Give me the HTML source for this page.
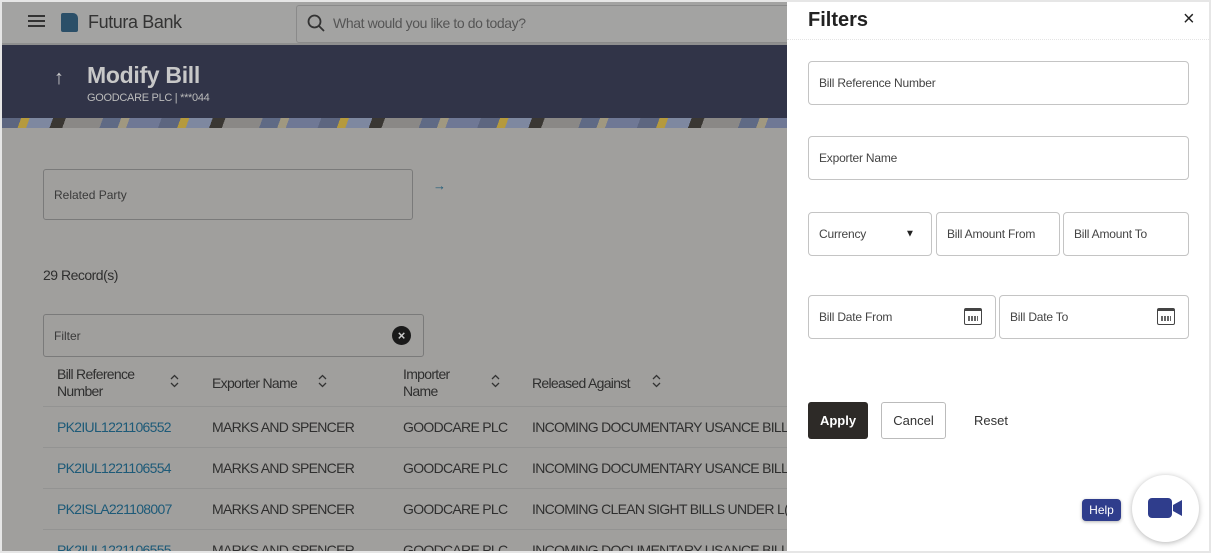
<!DOCTYPE html>
<html><head><meta charset="utf-8"><style>
*{box-sizing:border-box;margin:0;padding:0}
body{width:1211px;height:553px;overflow:hidden;font-family:"Liberation Sans",sans-serif;background:#e6e6e6;position:relative}
.frame{position:absolute;left:2px;top:2px;width:1207px;height:549px;background:#a09f9d;overflow:hidden}
.top{position:absolute;left:0;top:0;width:785px;height:43px;background:#a3a3a2;border-bottom:2px solid #8f8f8f}
.hdr{position:absolute;left:0;top:43px;width:785px;height:73px;background:#313448}
.stripe{position:absolute;left:0;top:116px;width:785px;height:10px;background:repeating-linear-gradient(110deg,#5d6680 0 18px,#b59a3e 18px 26px,#7e88a0 26px 48px,#3a3733 48px 60px,#8a8886 60px 95px,#5f6a85 95px 112px,#a09880 112px 120px,#6f7895 120px 150px)}
.t{position:absolute;white-space:nowrap}
.box{position:absolute;border:1px solid #7a7a7a;border-radius:3px}
.panel{position:absolute;left:785px;top:0;width:422px;height:549px;background:#fff}
.f{position:absolute;border:1px solid #c4c4c4;border-radius:4px;background:#fff;font-size:12px;color:#444;letter-spacing:-0.2px}
.f span{position:absolute;left:10px;top:50%;transform:translateY(-50%)}
.row{position:absolute;left:41px;width:744px;border-top:1px solid #939392}
.cell{position:absolute;font-size:14px;color:#2f2f2f;letter-spacing:-0.7px}
.lk{color:#1d5a78}
.cal{position:absolute;width:18px;height:17px;border:1.5px solid #444;border-top-width:3px;border-radius:2px;background:repeating-linear-gradient(90deg,#666 0 2px,#fff 2px 3px) 3px 5px/10px 5px no-repeat #fff}
</style></head><body><div class="frame">
<div class="top">
 <div class="t" style="left:26px;top:13px;width:17px;height:2px;background:#333;box-shadow:0 5px 0 #333,0 10px 0 #333"></div>
 <div class="t" style="left:59px;top:11px;width:17px;height:19px;background:#2b4f68;border-radius:2px 5px 2px 2px"></div>
 <div class="t" style="left:86px;top:10px;font-size:18px;color:#333;letter-spacing:-0.4px">Futura Bank</div>
 <div class="box" style="left:294px;top:3px;width:500px;height:38px;border-color:#8a8a8a"></div>
 <svg class="t" style="left:305px;top:12px" width="18" height="18"><circle cx="7.5" cy="7.5" r="6" fill="none" stroke="#333" stroke-width="1.8"/><line x1="12" y1="12" x2="17" y2="17" stroke="#333" stroke-width="1.8"/></svg>
 <div class="t" style="left:331px;top:13px;font-size:14px;color:#555;letter-spacing:-0.4px">What would you like to do today?</div>
</div>
<div class="hdr">
 <div class="t" style="left:52px;top:22px;font-size:20px;color:#ccc">↑</div>
 <div class="t" style="left:85px;top:17px;font-size:23px;font-weight:bold;color:#c8c8c8;letter-spacing:-0.3px">Modify Bill</div>
 <div class="t" style="left:85px;top:47px;font-size:11px;color:#bbb;letter-spacing:-0.3px">GOODCARE PLC | ***044</div>
</div>
<div class="stripe"></div>
<div class="box" style="left:41px;top:167px;width:370px;height:51px"></div>
<div class="t" style="left:52px;top:186px;font-size:12px;color:#3a3a3a">Related Party</div>
<div class="t" style="left:431px;top:176px;font-size:13px;color:#1d5a78">→</div>
<div class="t" style="left:41px;top:265px;font-size:14px;color:#2f2f2f;letter-spacing:-0.5px">29 Record(s)</div>
<div class="box" style="left:41px;top:312px;width:381px;height:43px"></div>
<div class="t" style="left:52px;top:327px;font-size:12px;color:#3a3a3a">Filter</div>
<div class="t" style="left:390px;top:324px;width:19px;height:19px;border-radius:50%;background:#1a1a1a;color:#ccc;font-size:13px;font-weight:bold;text-align:center;line-height:19px">×</div>
<div class="cell" style="left:55px;top:364px;line-height:17px">Bill Reference<br>Number</div>
<div class="cell" style="left:210px;top:373px">Exporter Name</div>
<div class="cell" style="left:401px;top:364px;line-height:17px">Importer<br>Name</div>
<div class="cell" style="left:530px;top:373px">Released Against</div>
<svg class="t" style="left:168px;top:372px" width="9" height="14"><path d="M1 5L4.5 1.5 8 5M1 9l3.5 3.5L8 9" fill="none" stroke="#333" stroke-width="1.3"/></svg>
<svg class="t" style="left:316px;top:372px" width="9" height="14"><path d="M1 5L4.5 1.5 8 5M1 9l3.5 3.5L8 9" fill="none" stroke="#333" stroke-width="1.3"/></svg>
<svg class="t" style="left:489px;top:372px" width="9" height="14"><path d="M1 5L4.5 1.5 8 5M1 9l3.5 3.5L8 9" fill="none" stroke="#333" stroke-width="1.3"/></svg>
<svg class="t" style="left:650px;top:372px" width="9" height="14"><path d="M1 5L4.5 1.5 8 5M1 9l3.5 3.5L8 9" fill="none" stroke="#333" stroke-width="1.3"/></svg>
<div class="row" style="top:404px"></div><div class="row" style="top:445px"></div><div class="row" style="top:486px"></div><div class="row" style="top:527px"></div>
<div class="cell lk" style="left:55px;top:417px">PK2IUL1221106552</div><div class="cell" style="left:210px;top:417px">MARKS AND SPENCER</div><div class="cell" style="left:401px;top:417px">GOODCARE PLC</div><div class="cell" style="left:530px;top:417px">INCOMING DOCUMENTARY USANCE BILL</div>
<div class="cell lk" style="left:55px;top:458px">PK2IUL1221106554</div><div class="cell" style="left:210px;top:458px">MARKS AND SPENCER</div><div class="cell" style="left:401px;top:458px">GOODCARE PLC</div><div class="cell" style="left:530px;top:458px">INCOMING DOCUMENTARY USANCE BILL</div>
<div class="cell lk" style="left:55px;top:499px">PK2ISLA221108007</div><div class="cell" style="left:210px;top:499px">MARKS AND SPENCER</div><div class="cell" style="left:401px;top:499px">GOODCARE PLC</div><div class="cell" style="left:530px;top:499px">INCOMING CLEAN SIGHT BILLS UNDER L(</div>
<div class="cell lk" style="left:55px;top:540px">PK2IUL1221106555</div><div class="cell" style="left:210px;top:540px">MARKS AND SPENCER</div><div class="cell" style="left:401px;top:540px">GOODCARE PLC</div><div class="cell" style="left:530px;top:540px">INCOMING DOCUMENTARY USANCE BILL</div>

<div class="panel">
 <div class="t" style="left:21px;top:7px;font-size:20px;font-weight:bold;color:#222">Filters</div>
 <div class="t" style="left:396px;top:6px;font-size:20px;color:#222">×</div>
 <div class="t" style="left:0;top:37px;width:422px;border-top:1px dotted #e4e4e4"></div>
 <div class="f" style="left:21px;top:59px;width:381px;height:44px"><span>Bill Reference Number</span></div>
 <div class="f" style="left:21px;top:134px;width:381px;height:44px"><span>Exporter Name</span></div>
 <div class="f" style="left:21px;top:210px;width:124px;height:44px"><span>Currency</span><span style="left:96px;font-size:10px;color:#222">▼</span></div>
 <div class="f" style="left:149px;top:210px;width:124px;height:44px"><span>Bill Amount From</span></div>
 <div class="f" style="left:276px;top:210px;width:126px;height:44px"><span>Bill Amount To</span></div>
 <div class="f" style="left:21px;top:293px;width:188px;height:44px"><span>Bill Date From</span><div class="cal" style="left:155px;top:12px"></div></div>
 <div class="f" style="left:212px;top:293px;width:190px;height:44px"><span>Bill Date To</span><div class="cal" style="left:157px;top:12px"></div></div>
 <div class="t" style="left:21px;top:400px;width:60px;height:37px;background:#2d2a27;border-radius:3px;color:#fff;font-size:13px;font-weight:bold;text-align:center;line-height:37px">Apply</div>
 <div class="t" style="left:94px;top:400px;width:65px;height:37px;border:1px solid #bbb;border-radius:3px;color:#333;font-size:13px;text-align:center;line-height:35px">Cancel</div>
 <div class="t" style="left:187px;top:411px;font-size:13px;color:#333">Reset</div>
 <div class="t" style="left:295px;top:497px;width:39px;height:22px;background:#2f3d8c;border-radius:4px;color:#fff;font-size:12px;text-align:center;line-height:22px;box-shadow:0 1px 3px rgba(0,0,0,.3)">Help</div>
 <div class="t" style="left:345px;top:473px;width:67px;height:67px;border-radius:50%;background:#fff;box-shadow:0 1px 6px rgba(0,0,0,.3)"></div>
 <svg class="t" style="left:361px;top:495px" width="36" height="22"><rect x="0" y="1" width="24" height="20" rx="4" fill="#2f3d8c"/><path d="M25 8l9-5v16l-9-5z" fill="#2f3d8c"/></svg>
</div>
</div></body></html>
